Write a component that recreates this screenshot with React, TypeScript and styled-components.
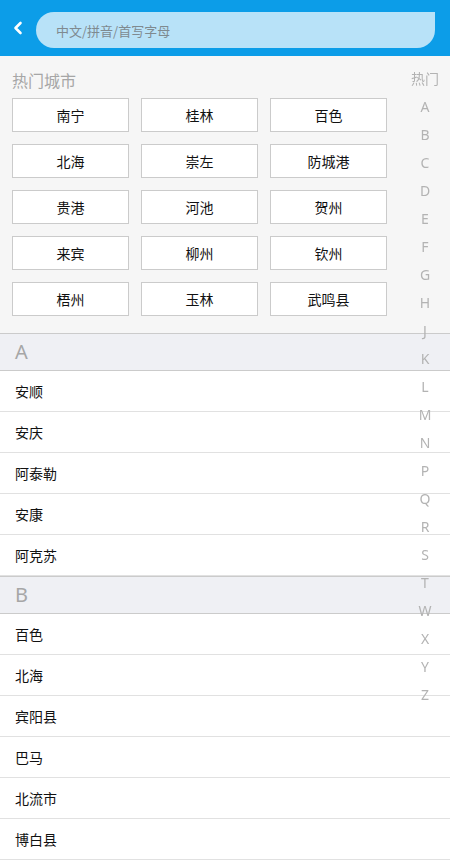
import React from 'react'
import styled, { createGlobalStyle } from 'styled-components'

const hotCities = [
  '南宁', '桂林', '百色',
  '北海', '崇左', '防城港',
  '贵港', '河池', '贺州',
  '来宾', '柳州', '钦州',
  '梧州', '玉林', '武鸣县',
]

const groups = [
  { letter: 'A', cities: ['安顺', '安庆', '阿泰勒', '安康', '阿克苏'] },
  { letter: 'B', cities: ['百色', '北海', '宾阳县', '巴马', '北流市', '博白县'] },
]

const indexKeys = ['热门', 'A', 'B', 'C', 'D', 'E', 'F', 'G', 'H', 'J', 'K', 'L', 'M', 'N', 'P', 'Q', 'R', 'S', 'T', 'W', 'X', 'Y', 'Z']

const App = (): JSX.Element => {
  return (
    <Page>
      <GlobalStyle />
      <Header>
        <BackButton aria-label='back'>
          <svg width='10' height='14' viewBox='0 0 10 14'>
            <polyline points='7.5,2 2.5,7 7.5,12' fill='none' stroke='#fff' strokeWidth='2.6' strokeLinecap='round' strokeLinejoin='round' />
          </svg>
        </BackButton>
        <SearchBox placeholder='中文/拼音/首写字母' />
      </Header>

      <HotSection>
        <HotTitle>热门城市</HotTitle>
        <HotGrid>
          {hotCities.map(city => (
            <CityButton key={city}>{city}</CityButton>
          ))}
        </HotGrid>
      </HotSection>

      {groups.map(group => (
        <section key={group.letter}>
          <GroupHeader>{group.letter}</GroupHeader>
          {group.cities.map(city => (
            <CityRow key={city}>{city}</CityRow>
          ))}
        </section>
      ))}

      <IndexBar>
        {indexKeys.map(key => (
          <IndexKey key={key}>{key}</IndexKey>
        ))}
      </IndexBar>
    </Page>
  )
}

export default App

const GlobalStyle = createGlobalStyle`
  * { box-sizing: border-box; }

  body {
    margin: 0;
    background: #fff;
    font-family: "Noto Sans", "Noto Sans CJK SC", sans-serif;
  }
`

const Page = styled.div`
  width: 100%;
  background: #fff;
`

const Header = styled.header`
  display: flex;
  align-items: flex-start;
  height: 56px;
  padding: 10px 15px 0 0;
  background: #0c9de8;
`

const BackButton = styled.button`
  display: flex;
  align-items: center;
  justify-content: center;
  width: 36px;
  height: 36px;
  padding: 0;
  border: none;
  background: transparent;
`

const SearchBox = styled.input`
  flex: 1;
  height: 36px;
  margin-top: 2px;
  padding: 0 20px;
  border: none;
  border-radius: 18px 0 18px 18px;
  background: #b8e2f8;
  outline: none;

  font-family: "Noto Sans CJK SC", sans-serif;
  font-size: 13px;
  color: #333;

  &::placeholder {
    color: #7f8a90;
  }
`

const HotSection = styled.div`
  padding: 10px 63px 17px 12px;
  background: #f6f6f6;
`

const HotTitle = styled.h2`
  margin: 0 0 4px;
  height: 28px;
  line-height: 28px;
  font-family: "Noto Sans CJK SC", sans-serif;
  font-size: 16px;
  font-weight: 400;
  color: #a6a6a6;
`

const HotGrid = styled.div`
  display: grid;
  grid-template-columns: repeat(3, 117px);
  grid-auto-rows: 34px;
  gap: 12px;
`

const CityButton = styled.div`
  display: flex;
  align-items: center;
  justify-content: center;
  background: #fff;
  border: 1px solid #cbcbcb;

  font-family: "Noto Sans CJK SC", sans-serif;
  font-size: 14px;
  color: #111;
`

const GroupHeader = styled.div`
  height: 38px;
  padding-left: 15px;
  line-height: 36px;
  background: #eff0f4;
  border-top: 1px solid #cbcbcb;
  border-bottom: 1px solid #cbcbcb;

  font-family: "Noto Sans", sans-serif;
  font-size: 20px;
  color: #a6a6a6;
`

const CityRow = styled.div`
  height: 41px;
  padding-left: 15px;
  line-height: 40px;
  background: #fff;
  border-bottom: 1px solid #e1e1e1;

  font-family: "Noto Sans CJK SC", sans-serif;
  font-size: 14px;
  color: #111;
`

// floating letter index, sits over the list on the right
const IndexBar = styled.nav`
  position: fixed;
  top: 65px;
  right: 0;
  width: 50px;
  display: flex;
  flex-direction: column;
`

const IndexKey = styled.span`
  height: 28px;
  line-height: 28px;
  text-align: center;

  font-family: "Noto Sans", "Noto Sans CJK SC", sans-serif;
  font-size: 14px;
  color: #b3b3b3;
`
